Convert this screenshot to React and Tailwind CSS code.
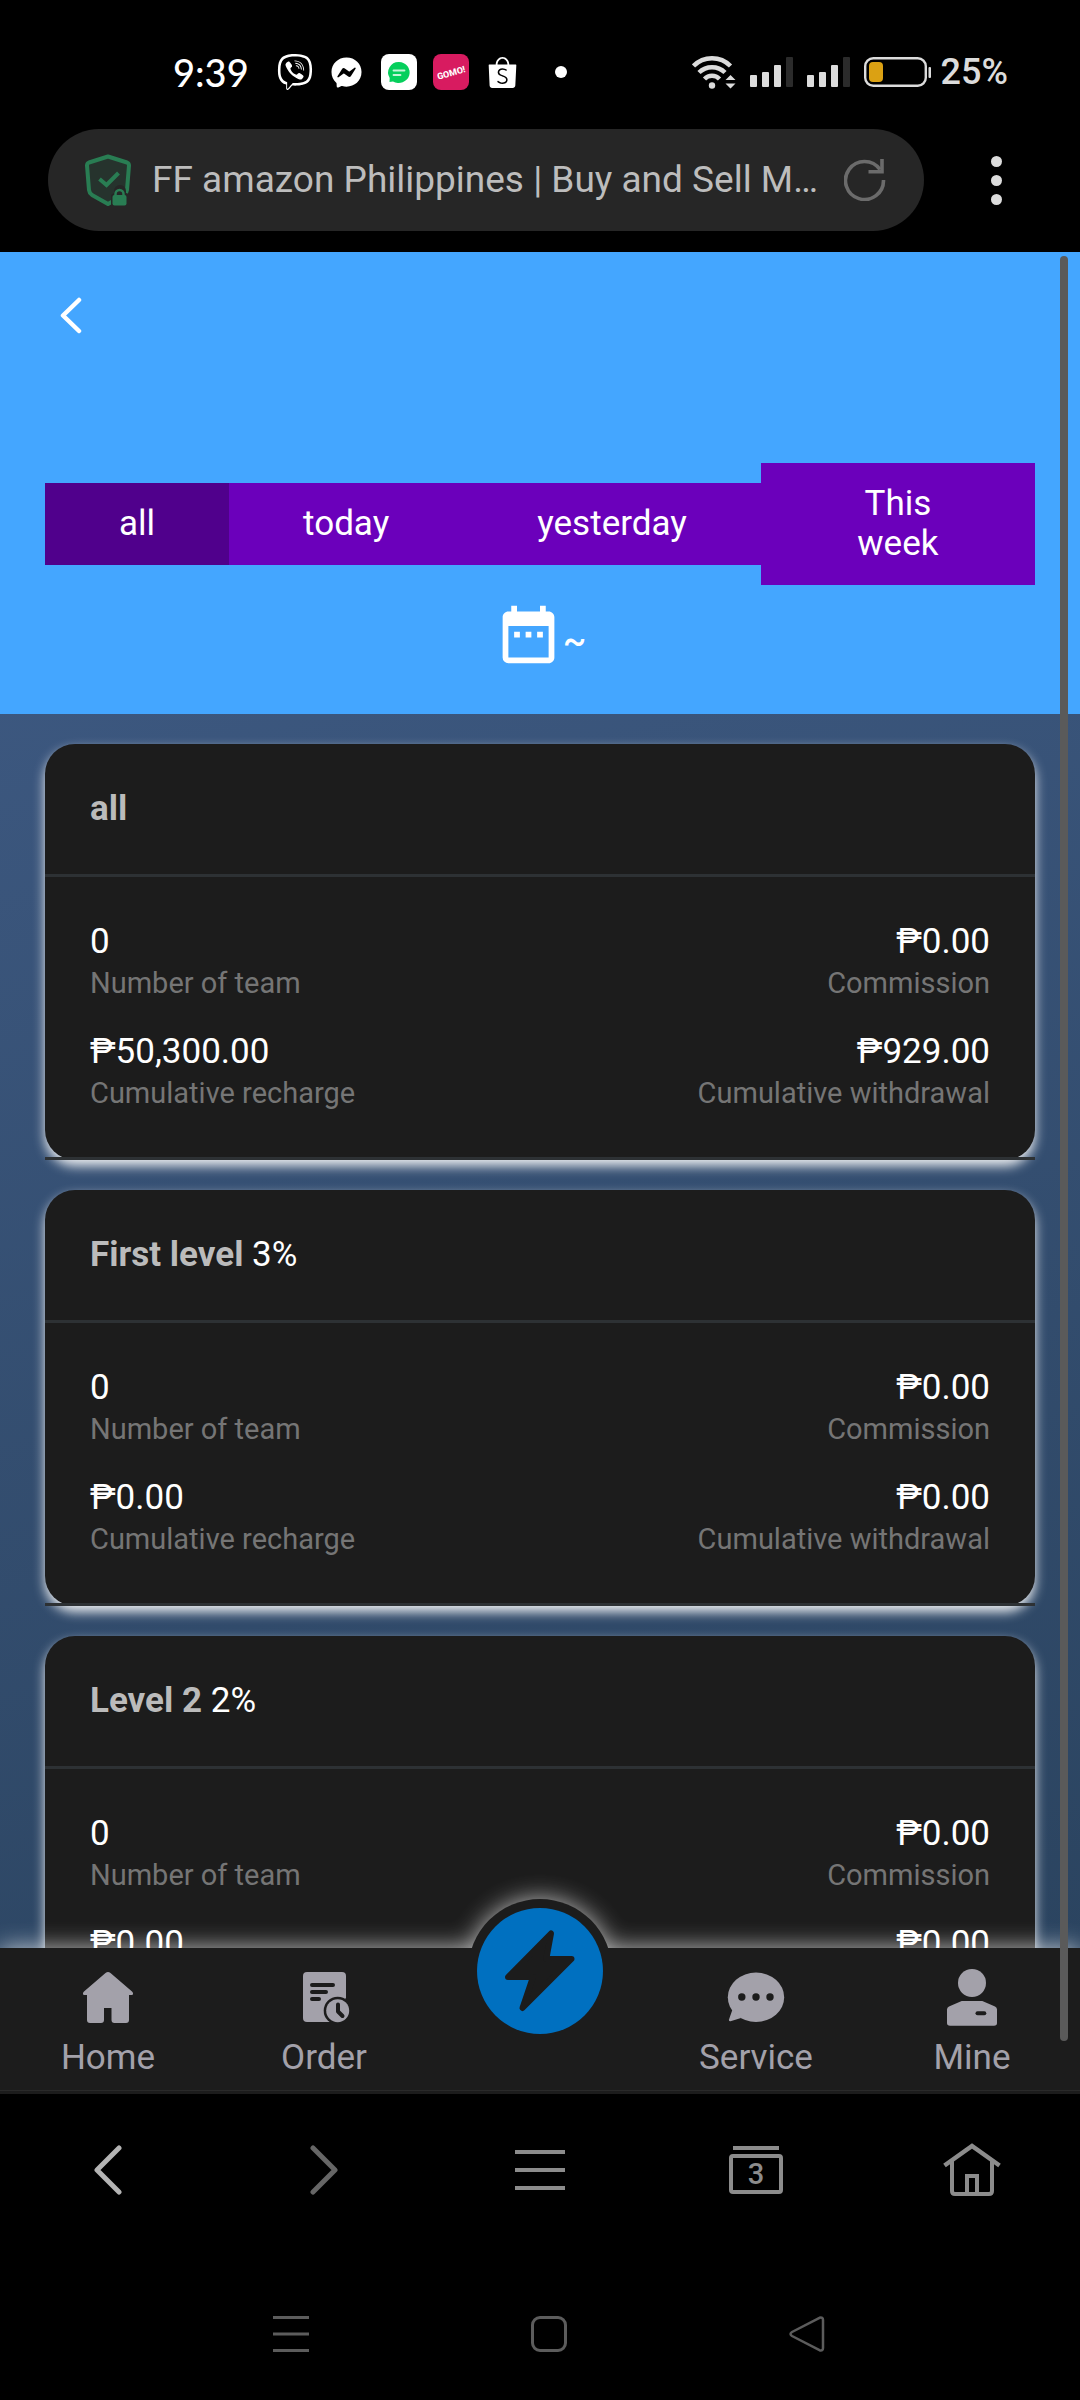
import { useState } from "react";
import { FaFacebookMessenger, FaViber } from "react-icons/fa";
import { MdDateRange } from "react-icons/md";
import { SiShopee } from "react-icons/si";

const ranges = ["all", "today", "yesterday", "This week"];

const levels = [
  { title: "all", team: "0", commission: "₱0.00", recharge: "₱50,300.00", withdrawal: "₱929.00" },
  { title: "First level", rate: "3%", team: "0", commission: "₱0.00", recharge: "₱0.00", withdrawal: "₱0.00" },
  { title: "Level 2", rate: "2%", team: "0", commission: "₱0.00", recharge: "₱0.00", withdrawal: "₱0.00" },
];

function Signal() {
  return (
    <svg viewBox="0 0 43 30" className="h-[30px] w-[43px]" fill="#dcdcdc">
      <rect x="0" y="18" width="7" height="12" rx="1" />
      <rect x="12" y="15" width="7" height="15" rx="1" />
      <rect x="24" y="8" width="7" height="22" rx="1" />
      <rect x="36" y="0" width="7" height="30" rx="1" fill="#2b2b2b" />
    </svg>
  );
}

function StatusBar() {
  return (
    <div className="flex items-center justify-between pt-11 pr-[72px] pl-[173px]">
      <div className="flex h-14 items-center gap-4 text-white">
        <span className="mr-3 font-['Lato'] text-[38px] leading-[56px] font-medium">9:39</span>
        <FaViber className="size-9" />
        <span className="flex w-9 justify-center"><FaFacebookMessenger className="size-[31px]" /></span>
        <svg viewBox="0 0 36 36" className="size-9">
          <rect width="36" height="36" rx="8" fill="#fff" />
          <path d="M18 8a11 10.500 0 1 1-6 19.500L8.500 28l.2-4A10.500 10.500 0 0 1 18 8z" fill="#06cf5c" />
          <path d="M12.500 16.500h11M12.500 21h7" stroke="#c5f5d8" strokeWidth="1.800" strokeLinecap="round" />
        </svg>
        <svg viewBox="0 0 36 36" className="size-9">
          <rect width="36" height="36" rx="8" fill="#d81b60" />
          <text x="18" y="22" textAnchor="middle" fontSize="9" fontWeight="800" fill="#fff" fontFamily="Roboto, sans-serif" transform="rotate(-16 18 18)">GOMO!</text>
        </svg>
        <span className="flex w-9 justify-center"><SiShopee className="size-[31px]" /></span>
        <span className="ml-[18px] size-3 rounded-full bg-white" />
      </div>
      <div className="flex items-center gap-3.5">
        <svg viewBox="0 0 44 34" className="h-[34px] w-11" fill="none" stroke="#dcdcdc" strokeWidth="4.500">
          <path d="M1.500 11a26 26 0 0 1 37 0" />
          <path d="M7 17.500a18.500 18.500 0 0 1 26 0" />
          <path d="M12.500 24a10.500 10.500 0 0 1 15 0" />
          <circle cx="20" cy="30.500" r="3.200" fill="#dcdcdc" stroke="none" />
          <path d="M33.500 25l5-5 5 5zM33.500 28.500l5 5 5-5z" fill="#dcdcdc" stroke="none" />
        </svg>
        <Signal />
        <Signal />
        <div className="flex items-center gap-2.5">
          <svg viewBox="0 0 67 30" className="h-[30px] w-[67px]">
            <rect x="1.200" y="1.200" width="60.600" height="27.600" rx="8" fill="none" stroke="#dcdcdc" strokeWidth="2.400" />
            <rect x="5" y="5" width="14" height="20" rx="4" fill="#dba113" />
            <rect x="64.500" y="10" width="2.500" height="11" rx="1" fill="#dcdcdc" />
          </svg>
          <span className="text-[36px] leading-[56px] font-medium text-[#dcdcdc]">25%</span>
        </div>
      </div>
    </div>
  );
}

function AddressBar() {
  return (
    <div className="flex items-center pt-[29px] pr-3 pb-[21px] pl-12">
      <div className="flex h-[102px] min-w-0 flex-1 items-center gap-5 rounded-full bg-[#262626] pr-[38px] pl-9">
        <svg viewBox="0 0 48 52" className="h-[52px] w-12 shrink-0">
          <path d="M24 2.500L43 8.500q2 .8 2 3L43 36q-.3 3-3 5L24 50 8 41q-2.700-2-3-5L3 11.500q0-2.200 2-3z" fill="#26332d" stroke="#297d53" strokeWidth="4" strokeLinejoin="round" />
          <path d="M15.500 25l7 6L34.500 19" fill="none" stroke="#297d53" strokeWidth="4" />
          <path d="M27 52V41l3-2v-2a6 6 0 0 1 12 0v2l6 2v11z" fill="#262626" />
          <rect x="28.500" y="41" width="14" height="10.500" rx="2" fill="#297d53" />
          <path d="M31.500 42v-2a4 4 0 0 1 8 0v2" fill="none" stroke="#297d53" strokeWidth="2.500" />
        </svg>
        <input
          readOnly
          aria-label="Address"
          value="FF amazon Philippines | Buy and Sell M…"
          className="min-w-0 flex-1 bg-transparent text-[37px] leading-[50px] text-[#bdbdbd] outline-none"
        />
        <button aria-label="Reload">
          <svg viewBox="0 0 42 42" className="size-[42px]" fill="none" stroke="#6b6b6b" strokeWidth="3.600">
            <path d="M39.500 21A19 19 0 1 1 36 10.500" />
            <path d="M38 0v12.700H24.500" />
          </svg>
        </button>
      </div>
      <button aria-label="Browser menu" className="flex w-36 flex-col items-center gap-2">
        <span className="size-[11px] rounded-full bg-[#dcdcdc]" />
        <span className="size-[11px] rounded-full bg-[#dcdcdc]" />
        <span className="size-[11px] rounded-full bg-[#dcdcdc]" />
      </button>
    </div>
  );
}

function Stat({ value, label, right }) {
  return (
    <div className={right ? "text-right" : ""}>
      <p className="text-[35px] leading-[48px] text-white">{value}</p>
      <p className="text-[29px] leading-[34px] text-[#757575]">{label}</p>
    </div>
  );
}

function LevelCard({ level }) {
  return (
    <section className="rounded-[30px] bg-[#1c1c1c] shadow-[0_6px_12px_#ebedf0]">
      <h2 className="border-b-3 border-[#2d3134] px-[45px] py-10 text-[35px] leading-[50px] font-bold text-[#bbbbbb]">
        {level.title}
        {level.rate && <span className="font-normal text-white"> {level.rate}</span>}
      </h2>
      <div className="grid grid-cols-2 gap-y-7 border-b-3 border-[#2d3134] px-[45px] pt-[41px] pb-[47px]">
        <Stat value={level.team} label="Number of team" />
        <Stat value={level.commission} label="Commission" right />
        <Stat value={level.recharge} label="Cumulative recharge" />
        <Stat value={level.withdrawal} label="Cumulative withdrawal" right />
      </div>
    </section>
  );
}

function NavItem({ label, children }) {
  return (
    <a href="#" className="flex flex-1 flex-col items-center gap-2.5 pt-5 pb-2.5">
      <svg viewBox="0 0 58 58" className="size-[58px]" fill="#a3a1aa">{children}</svg>
      <span className="text-[35px] leading-[44px] text-[#a3a1aa]">{label}</span>
    </a>
  );
}

function BottomNav() {
  return (
    <nav className="relative drop-shadow-[0_0_12px_rgba(255,255,255,0.72)]">
      <div className="absolute -top-[49px] left-1/2 size-36 -translate-x-1/2 rounded-full bg-[#1c1c1c]" />
      <div className="relative flex bg-[#1c1c1c]">
        <NavItem label="Home">
          <path d="M26.500 5q2.500-2 5 0L53 23.500q2 2 .3 3.500H50v25q0 3-3 3H35.500q-3 0-3-3V40H25v12q0 3-3 3H11q-3 0-3-3V27H4.700Q3 25.500 5 23.500z" />
        </NavItem>
        <NavItem label="Order">
          <rect x="8" y="4" width="43" height="50" rx="4" />
          <path d="M17 17h21M17 24h14M17 31h7" stroke="#1c1c1c" strokeWidth="4" strokeLinecap="round" />
          <circle cx="42.700" cy="42.700" r="14" fill="#1c1c1c" />
          <rect x="50.500" y="30" width="8" height="28" fill="#1c1c1c" />
          <circle cx="42.700" cy="42.700" r="11.500" />
          <path d="M43 36.500v7l4.500 4.500" fill="none" stroke="#1c1c1c" strokeWidth="4" strokeLinecap="round" strokeLinejoin="round" />
        </NavItem>
        <div className="flex-1" />
        <NavItem label="Service">
          <ellipse cx="29" cy="29.300" rx="28.200" ry="24.700" />
          <path d="M5.300 42L2 51.500q-.5 2 1.500 1.700L14 50z" />
          <g fill="#1c1c1c">
            <circle cx="14.800" cy="29" r="3.700" />
            <circle cx="29" cy="29" r="3.700" />
            <circle cx="43" cy="29" r="3.700" />
          </g>
        </NavItem>
        <NavItem label="Mine">
          <circle cx="29" cy="15" r="14" />
          <path d="M18.700 33h20.600L52 38.500q2 1 2 3V55q0 2.700-3 2.700H7q-3 0-3-2.700V41.500q0-2 2-3z" />
          <path d="M34.500 45.300h6.800" stroke="#1c1c1c" strokeWidth="4" strokeLinecap="round" />
        </NavItem>
      </div>
      <div className="relative h-1 border-t border-[#2a2a2a] bg-[#1c1c1c]" />
      <button aria-label="Grab" className="absolute -top-10 left-1/2 size-[126px] -translate-x-1/2 rounded-full bg-[#0070c0]">
        <svg viewBox="0 0 126 126" className="size-full">
          <path d="M74 25.500L69.300 51H94.500L45.500 100 56 69H31z" fill="#1c1c1c" stroke="#1c1c1c" strokeWidth="6" strokeLinejoin="round" />
        </svg>
      </button>
    </nav>
  );
}

function BrowserToolbar() {
  return (
    <div className="grid h-[152px] grid-cols-5 place-items-center">
      <button aria-label="Back">
        <svg viewBox="0 0 28 50" className="h-[50px] w-7" fill="none" stroke="#b4b4b4" strokeWidth="5" strokeLinecap="round" strokeLinejoin="round">
          <path d="M25 3L3 25l22 22" />
        </svg>
      </button>
      <button aria-label="Forward">
        <svg viewBox="0 0 28 50" className="h-[50px] w-7" fill="none" stroke="#666666" strokeWidth="5" strokeLinecap="round" strokeLinejoin="round">
          <path d="M3 3l22 22L3 47" />
        </svg>
      </button>
      <button aria-label="Menu" className="flex w-[50px] flex-col gap-[14px]">
        <span className="h-1 bg-[#8c8c8c]" />
        <span className="h-1 bg-[#8c8c8c]" />
        <span className="h-1 bg-[#8c8c8c]" />
      </button>
      <button aria-label="Open tabs" className="flex flex-col items-center gap-1">
        <span className="h-1 w-[46px] bg-[#8c8c8c]" />
        <span className="flex h-10 w-[54px] items-center justify-center rounded-[4px] border-4 border-[#8c8c8c] text-[29px] leading-[32px] font-medium text-[#8c8c8c]">3</span>
      </button>
      <button aria-label="Browser home">
        <svg viewBox="0 0 58 54" className="h-[54px] w-[58px]" fill="none" stroke="#8c8c8c" strokeWidth="4.500">
          <path d="M1.500 22.500L29 3l27.500 19.500" />
          <path d="M9 17.500V48q0 3 3 3h34q3 0 3-3V17.500" strokeWidth="4" />
          <path d="M24 51V33h10v18" strokeWidth="4" />
        </svg>
      </button>
    </div>
  );
}

function SystemBar() {
  return (
    <div className="flex justify-center gap-[222px] pt-[70px] pb-12 pl-[18px]">
      <button aria-label="Recent apps" className="size-9">
        <svg viewBox="0 0 36 36" className="size-9" stroke="#5c5c5c" strokeWidth="3">
          <path d="M0 1.500h36M0 18h36M0 34.500h36" />
        </svg>
      </button>
      <button aria-label="System home" className="size-9 rounded-[9px] border-3 border-[#5c5c5c]" />
      <button aria-label="System back" className="size-9">
        <svg viewBox="0 0 36 36" className="size-9" fill="none" stroke="#5c5c5c" strokeWidth="2.500" strokeLinejoin="round">
          <path d="M3 16L30.500 1.800Q34 .8 34 4v28q0 3.200-3.500 2.200L3 20q-3-2 0-4z" />
        </svg>
      </button>
    </div>
  );
}

export default function App() {
  const [range, setRange] = useState("all");

  return (
    <div className="flex h-screen flex-col overflow-hidden bg-black font-['Roboto',sans-serif]">
      <StatusBar />
      <AddressBar />

      <div className="relative flex min-h-0 flex-1 flex-col overflow-hidden">
        <main className="min-h-0 flex-1 overflow-y-auto bg-[linear-gradient(165deg,#415d88,#2b4460)] [scrollbar-width:none]">
          <header className="bg-[#44a6ff] pb-[45px] text-white">
            <button aria-label="Go back" className="flex h-[126px] items-center px-[58px]">
              <svg viewBox="0 0 26 38" className="h-[38px] w-[26px]" fill="none" stroke="#fff" strokeWidth="4.500" strokeLinecap="round" strokeLinejoin="round">
                <path d="M21 4L5 19.500 21 35" />
              </svg>
            </button>
            <div className="mt-[85px] flex items-center px-[45px]">
              {ranges.map((r) => (
                <button
                  key={r}
                  onClick={() => setRange(r)}
                  className={`grow px-[74px] py-[21px] text-[35px] leading-[40px] ${r === range ? "bg-[#50008c]" : "bg-[#6b00bb]"}`}
                >
                  {r}
                </button>
              ))}
            </div>
            <button aria-label="Pick dates" className="mx-auto mt-[15px] flex items-end">
              <MdDateRange className="size-[69px]" />
              <span className="text-[35px] leading-[55px] font-medium">~</span>
            </button>
          </header>
          <div className="flex flex-col gap-[30px] px-[45px] py-[30px]">
            {levels.map((l) => <LevelCard key={l.title} level={l} />)}
          </div>
        </main>
        <BottomNav />
        <div className="absolute top-1 right-3 bottom-[53px] w-2 rounded-full bg-[#5a5a5a]" />
      </div>

      <BrowserToolbar />
      <SystemBar />
    </div>
  );
}
